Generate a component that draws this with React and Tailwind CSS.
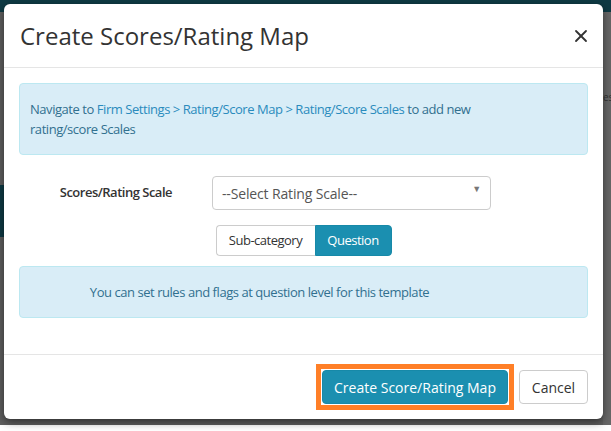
import { X } from "lucide-react";

function Backdrop() {
  return (
    <div className="flex h-[431px] w-[611px] flex-col bg-white">
      <div className="h-[12px] bg-[#0e3a44]" />
      <div className="flex h-[413px] bg-[#5f5f5f]">
        <div className="flex w-[4px] flex-col">
          <div className="h-[173px]" />
          <div className="h-[52px] bg-[#0e3a44]" />
        </div>
        <div className="flex-1" />
        <div className="w-[8px] bg-[#676767] pt-[80px] text-[10px] leading-none text-[#333]">
          es
        </div>
      </div>
    </div>
  );
}

function Alert({ children, className = "" }) {
  return (
    <div
      className={
        "rounded-[4px] border border-[#bce8f1] bg-[#d9edf7] py-[15px] pl-[10px] pr-[98px] text-[13px] leading-[20px] tracking-[-0.45px] text-[#31708f] " +
        className
      }
    >
      {children}
    </div>
  );
}

export default function App() {
  return (
    <div
      className="relative h-[431px] w-[611px] overflow-hidden"
      style={{ fontFamily: '"Open Sans", "Liberation Sans", sans-serif' }}
    >
      <Backdrop />

      {/* modal */}
      <div className="absolute left-[4px] top-[4px] flex w-[599px] flex-col rounded-[6px] bg-white shadow-[0_3px_9px_rgba(0,0,0,0.5)]">
        <div className="flex h-[64px] items-center justify-between border-b border-[#e5e5e5] pl-[16px] pr-[12px]">
          <h4 className="text-[24px] font-normal text-[#333]">Create Scores/Rating Map</h4>
          <button type="button" className="text-[#333]">
            <X size={20} strokeWidth={2.2} />
          </button>
        </div>

        <div className="flex flex-col px-[15px] pb-[36px] pt-[15px]">
          <Alert>
            Navigate to <a className="text-[#2a8bbd]">Firm Settings &gt; Rating/Score Map &gt; Rating/Score Scales</a>{" "}
            to add new rating/score Scales
          </Alert>

          <div className="mt-[21px] flex items-center">
            <label className="w-[153px] text-right text-[13px] font-semibold tracking-[-0.5px] whitespace-nowrap text-[#333]">
              Scores/Rating Scale
            </label>
            <div className="relative ml-[40px] flex h-[34px] w-[279px] items-center rounded-[4px] border border-[#ccc] pl-[9px] text-[14px] tracking-[-0.15px] text-[#555]">
              --Select Rating Scale--
              <span className="absolute right-[9px] top-[5px] text-[9px] text-[#777]">▼</span>
            </div>
          </div>

          <div className="mt-[15px] flex justify-center">
            <div className="flex h-[31px] text-[13px] tracking-[-0.5px]">
              <button
                type="button"
                className="w-[99px] rounded-l-[4px] border border-r-0 border-[#ccc] bg-white text-[#333]"
              >
                Sub-category
              </button>
              <button
                type="button"
                className="w-[77px] rounded-r-[4px] border border-[#1789a8] bg-[#1b8fb0] text-white"
              >
                Question
              </button>
            </div>
          </div>

          <Alert className="mt-[10px] text-center">
            You can set rules and flags at question level for this template
          </Alert>
        </div>

        <div className="flex h-[65px] items-center justify-end gap-[5px] border-t border-[#e5e5e5] pr-[15px]">
          <div className="border-[5px] border-[#ff7f27] p-[1px]">
            <button
              type="button"
              className="h-[34px] w-[186px] rounded-[4px] border border-[#1789a8] bg-[#1b8fb0] text-[14px] text-white"
            >
              Create Score/Rating Map
            </button>
          </div>
          <button
            type="button"
            className="h-[34px] w-[69px] rounded-[4px] border border-[#ccc] bg-white text-[14px] text-[#333]"
          >
            Cancel
          </button>
        </div>
      </div>
    </div>
  );
}
